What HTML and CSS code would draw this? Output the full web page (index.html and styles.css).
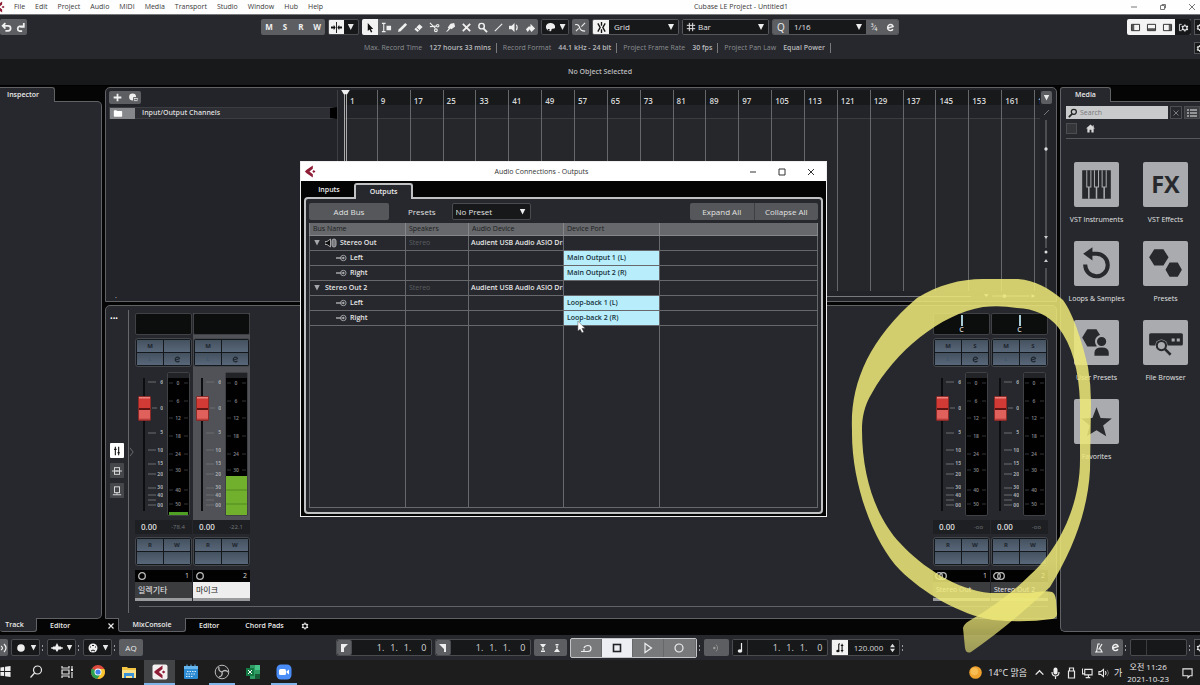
FILE: index.html
```html
<!DOCTYPE html>
<html lang="ko">
<head>
<meta charset="utf-8">
<title>Cubase LE Project - Untitled1</title>
<link rel="stylesheet" href="styles.css">
</head>
<body>
<svg class="defs" aria-hidden="true">
  <symbol id="meter-well" viewBox="0 0 23 153">
    <rect x="0.5" y="5.500" width="22" height="143" rx="1.500" fill="#010101" stroke="#3f4144"/>
    <rect x="1" y="6" width="21" height="5" fill="#222326"/>
  </symbol>
  <symbol id="gear" viewBox="0 0 10 10"><circle cx="5" cy="5" r="2.700" fill="none" stroke="currentColor" stroke-width="1.400"/><path d="M5 .6v1.600M5 7.800v1.600M1.200 2.800l1.400.8M7.400 6.400l1.400.8M1.200 7.200l1.400-.8M7.400 3.600l1.400-.8" stroke="currentColor" stroke-width="1.600"/></symbol>
  <symbol id="edit-e" viewBox="0 0 10 10"><path d="M2.600 5.600L7.900 3.900C7.400 2 5.600 1.200 4 1.900 1.900 2.800 1.200 5.400 2.300 7.200c1.100 1.700 3.900 1.700 5.500-.2" fill="none" stroke="currentColor" stroke-width="1.600"/></symbol>
  <symbol id="logo" viewBox="0 0 14 14"><path d="M9.500.5L2.800 5.200 1 7l1.800 1.800 6.700 4.700V10L5.800 7l3.700-3z" fill="#8e1d35"/><path d="M10.600 5.400l1.700 1.600-1.700 1.600L8.900 7z" fill="#8e1d35"/></symbol>
  <symbol id="jack" viewBox="0 0 12 8"><path d="M0 4h6" stroke="currentColor" stroke-width="1.800"/><circle cx="8" cy="4" r="3" fill="none" stroke="currentColor"/><circle cx="8" cy="4" r="1.300" fill="currentColor"/></symbol>
</svg>

<header class="titlebar">
  <svg class="app-mark" viewBox="7 0 7 14"><use href="#logo" width="14" height="14"/></svg>
  <nav class="menus"><a href="#">File</a><a href="#">Edit</a><a href="#">Project</a><a href="#">Audio</a><a href="#">MIDI</a><a href="#">Media</a><a href="#">Transport</a><a href="#">Studio</a><a href="#">Window</a><a href="#">Hub</a><a href="#">Help</a></nav>
  <h1 class="app-title">Cubase LE Project - Untitled1</h1>
  <div class="window-keys">
    <button aria-label="Minimize"><svg viewBox="0 0 8 8"><path d="M1 4h6"/></svg></button>
    <button aria-label="Restore"><svg viewBox="0 0 8 8"><path d="M1.500 2.500h4v4h-4zM3 2.500v-1h3.500V5h-1"/></svg></button>
    <button aria-label="Close"><svg viewBox="0 0 8 8"><path d="M1 1l6 6M7 1L1 7"/></svg></button>
  </div>
</header>

<section class="toolbar">
  <div class="tool-row">
    <div class="group undo">
      <button aria-label="Undo"><svg viewBox="0 0 10 10"><path d="M2 3.500h4.500a2 2 0 010 4.500H4M4 1L1.500 3.500 4 6" class="line"/></svg></button>
      <button aria-label="Redo"><svg viewBox="0 0 10 10"><path d="M8 4H4a2.200 2.200 0 000 4.200h2.500M8 1v3.500H4.800" class="line"/></svg></button>
    </div>
    <div class="tool-set">
      <div class="group letters"><button>M</button><button>S</button><button>R</button><button>W</button></div>
      <div class="group split">
        <button class="on" aria-label="Auto-scroll"><svg viewBox="0 0 12 12"><path d="M6 0v12" stroke="currentColor"/><path d="M0 5h3V3l2 3-2 3V7H0zM12 5H9V3L7 6l2 3V7h3z" fill="currentColor"/></svg></button>
        <button class="dark" aria-label="Auto-scroll options"><i class="tri"></i></button>
      </div>
      <div class="group pens">
        <button class="on" aria-label="Select"><svg viewBox="0 0 12 12"><path d="M3 1l6 6.500H6.500L8 11 6.500 11.500 5 8.200 3 9.800z" fill="currentColor"/></svg></button>
        <button aria-label="Range"><svg viewBox="0 0 12 12"><path d="M1 1.500h4M1 10.500h4M3 1.500v9" class="line"/><path d="M6 4h5v5H6z" fill="currentColor"/></svg></button>
        <button aria-label="Draw"><svg viewBox="0 0 12 12"><path d="M1 11l1-3 7-7 2 2-7 7z" fill="currentColor"/></svg></button>
        <button aria-label="Erase"><svg viewBox="0 0 12 12"><path d="M1.500 8L7 2.500l3.500 3L5 11z" fill="currentColor"/><path d="M3.500 6l3.500 3.200" stroke="#5c5e61"/></svg></button>
        <button aria-label="Split"><svg viewBox="0 0 12 12"><path d="M1 1l6 6M1 5l7-.5" class="line"/><circle cx="9.500" cy="4" r="1.300" class="line"/><circle cx="7.500" cy="9" r="1.500" class="line"/></svg></button>
        <button aria-label="Glue"><svg viewBox="0 0 12 12"><path d="M1 11l3-4-1-1 3-4 4-1 1 4-4 3-1-1-3 3z" fill="currentColor"/></svg></button>
        <button aria-label="Mute"><svg viewBox="0 0 12 12"><path d="M2 2l8 8M10 2l-8 8" stroke="currentColor" stroke-width="2"/></svg></button>
        <button aria-label="Zoom"><svg viewBox="0 0 12 12"><circle cx="5" cy="4.500" r="3" fill="none" stroke="currentColor" stroke-width="1.600"/><path d="M7 7l4 4" stroke="currentColor" stroke-width="2"/></svg></button>
        <button aria-label="Line"><svg viewBox="0 0 12 12"><path d="M2 10l8-8" class="line"/></svg></button>
        <button aria-label="Play"><svg viewBox="0 0 12 12"><path d="M0 4h3l3-3v10L3 8H0z" fill="currentColor"/><path d="M8 3q2 3 0 6" class="line"/></svg></button>
        <button aria-label="Color"><svg viewBox="0 0 12 12"><path d="M1 8l3-3h2V2l5 5-4 4-2-3-2 3z" fill="currentColor"/></svg></button>
      </div>
      <div class="group darkset">
        <button class="dark" aria-label="Color palette"><svg viewBox="0 0 12 12"><path d="M6 1a5 4.500 0 000 9c1.500 0 .5-2 1.500-2.500S11 8 11 5.500A5 4.500 0 006 1z" fill="currentColor"/><path d="M3 7.500h2v2H3z" fill="#17181a"/></svg><i class="tri"></i></button>
      </div>
      <div class="group single"><button aria-label="Snap to zero"><svg viewBox="0 0 12 12"><path d="M0 3q4-1 5 3t6 4" class="line"/><path d="M7 5l4-4M1 10l3-3" class="line"/></svg></button></div>
      <div class="group choice">
        <button class="on" aria-label="Snap"><svg viewBox="0 0 12 12"><path d="M6 0v4M6 8v4M2 1.500l2.500 4.500L2 10.500M10 1.500L7.500 6l2.500 4.500" stroke="currentColor" stroke-width="1.500" fill="none"/></svg></button>
        <label class="pick"><select aria-label="Snap type"><option>Grid</option></select></label>
      </div>
      <div class="group choice">
        <label class="pick"><svg viewBox="0 0 12 12"><path d="M4 1v10M8 1v10M1 4h10M1 8h10" class="line"/></svg><select aria-label="Grid type"><option>Bar</option></select></label>
      </div>
      <div class="group choice quant">
        <button class="q">Q</button>
        <label class="pick"><select aria-label="Quantize preset"><option>1/16</option></select></label>
        <button aria-label="Soft quantize">³⁄₄</button>
        <button aria-label="Quantize panel"><svg class="e" viewBox="0 0 10 10"><use href="#edit-e"/></svg></button>
      </div>
    </div>
    <div class="zones">
      <div class="group white">
        <button aria-label="Left zone"><svg viewBox="0 0 12 10"><path d="M1.500 1.500h9v7h-9zM4 1.500v7M2.500 2v6"/></svg></button>
        <button aria-label="Lower zone"><svg viewBox="0 0 12 10"><path d="M1.500 1.500h9v7h-9zM2 6.500h8M2 7.500h8"/></svg></button>
        <button aria-label="Right zone"><svg viewBox="0 0 12 10"><path d="M1.500 1.500h9v7h-9zM8 1.500v7M9.500 2v6"/></svg></button>
        <button class="dark" aria-label="Window layout"><svg viewBox="0 0 12 10"><path d="M4 1.500H1.500v7H4" fill="none" stroke="#ddd"/><use href="#gear" x="3" y="1" width="9" height="9"/></svg></button>
      </div>
      <button class="edge dark" aria-label="Toolbar setup"><svg viewBox="0 0 5 10"><use href="#gear" width="10" height="10"/></svg></button>
    </div>
  </div>
  <div class="status-row">
    <dl class="status">
      <div><dt>Max. Record Time</dt><dd>127 hours 33 mins</dd></div>
      <div><dt>Record Format</dt><dd>44.1 kHz - 24 bit</dd></div>
      <div><dt>Project Frame Rate</dt><dd>30 fps</dd></div>
      <div><dt>Project Pan Law</dt><dd>Equal Power</dd></div>
    </dl>
    <button class="edge dark" aria-label="Status setup"><svg viewBox="0 0 5 10"><use href="#gear" width="10" height="10"/></svg></button>
  </div>
</section>
<p class="infoline">No Object Selected</p>

<main class="workspace">
  <aside class="zone left-zone">
    <div class="tabs top"><button class="tab active">Inspector</button></div>
    <div class="pane"></div>
    <div class="tabs bottom"><button class="tab active">Track</button><button class="tab">Editor</button></div>
  </aside>

  <section class="center">
    <div class="project">
      <div class="tracks">
        <div class="group add">
          <button aria-label="Add track"><svg viewBox="0 0 10 10"><path d="M5 1.500v7M1.500 5h7" stroke="currentColor" stroke-width="1.600"/></svg></button>
          <button aria-label="Track preset"><svg viewBox="0 0 12 10"><circle cx="5" cy="4.500" r="3.800" fill="currentColor"/><path d="M6 5h5v4H6z" fill="currentColor" stroke="#5c5e61"/><path d="M7 7h3" stroke="#333"/></svg></button>
        </div>
        <div class="track"><span class="folder"><svg viewBox="0 0 12 10"><path d="M1 2q0-1 1-1h2l1 1h5q1 0 1 1v5q0 1-1 1H2q-1 0-1-1z" fill="#fff"/></svg></span><b>Input/Output Channels</b></div>
        <span class="speck">.</span>
      </div>
      <div class="timeline">
        <ol class="ruler"><li>1</li><li>9</li><li>17</li><li>25</li><li>33</li><li>41</li><li>49</li><li>57</li><li>65</li><li>73</li><li>81</li><li>89</li><li>97</li><li>105</li><li>113</li><li>121</li><li>129</li><li>137</li><li>145</li><li>153</li><li>161</li><li>169</li></ol>
        <svg class="playhead" viewBox="0 0 10 7"><path d="M0 0h10L7 5H3z" fill="#eee"/></svg>
        <div class="hscroll"><i></i><svg viewBox="0 0 60 8"><path d="M1 2h5L3.500 5zM52 2l4 2-4 2z" fill="#ddd"/><circle cx="23" cy="4" r="2" fill="#ddd"/><path d="M10 4h40" stroke="#aaa"/></svg></div>
      </div>
      <div class="vscroll">
        <button aria-label="Ruler options"><i class="tri"></i></button>
        <svg viewBox="0 0 10 190" preserveAspectRatio="xMidYMin"><path d="M3 11l5-5" stroke="#777"/><path d="M5 16v128M5 164v22" stroke="#77797c"/><circle cx="5" cy="45" r="1.700" fill="#ddd"/><path d="M3 132h4l-2 3zM3 158h4l-2-3z" fill="#ccc"/><circle cx="5" cy="148" r="1.500" fill="#ddd"/></svg>
      </div>
    </div>

    <div class="mixer">
      <div class="mix-side">
        <button class="more" aria-label="More">•••</button>
        <button class="sq white-sq" aria-label="Faders"><svg viewBox="0 0 12 12"><path d="M4 1v10M8 1v10M2.500 4h3M6.500 8h3" stroke="currentColor" stroke-width="1.300"/></svg></button>
        <button class="sq" aria-label="Inserts"><svg viewBox="0 0 12 12"><rect x="3" y="2" width="6" height="8" class="line"/><path d="M0 6h12M4 6h4" class="line"/></svg></button>
        <button class="sq" aria-label="Sends"><svg viewBox="0 0 12 12"><rect x="3" y="1" width="6" height="7" class="line"/><path d="M1 10.500h10M6 8v2" class="line"/></svg></button>
      </div>
      <div class="mix-line"><svg viewBox="0 0 6 12"><path d="M1 1l4 5-4 5" fill="none" stroke="#77797c"/></svg></div>
      <div class="mix-body">
        <div class="strips">
          <article class="strip">
            <div class="pan"></div>
            <div class="keys"><button>M</button><button aria-label="Solo"></button><button class="dim">L</button><button aria-label="Edit"><svg viewBox="0 0 10 10"><use href="#edit-e"/></svg></button></div>
            <div class="level"><input type="range" value="83" aria-label="일렉기타 volume"><svg class="scale" viewBox="0 0 16 153"><g id="fader-scale"><path d="M1 15h8M5 41h5M1 66h8M1 83h8M1 97h8M1 107h8M1 121h8M1 128h8M1 133h8M1 138h8" stroke="#6a6c70" fill="none"/><g class="scale-text"><text x="16" y="17">6</text><text x="16" y="43">0</text><text x="16" y="67">5</text><text x="16" y="85">10</text><text x="16" y="98">15</text><text x="16" y="109">20</text><text x="16" y="122">30</text><text x="16" y="130">40</text><text x="16" y="140">00</text></g></g></svg><svg class="meter" viewBox="0 0 23 153"><use href="#meter-well"/><path d="M2 145h19v3H2z" fill="#4f9f25"/><g id="meter-marks"><path d="M2 16h4M17 16h4M2 34h4M17 34h4M2 51h4M17 51h4M2 69h4M17 69h4M2 87h4M17 87h4M2 103h4M17 103h4M2 123h4M17 123h4M2 137h4M17 137h4" stroke="#55575a" stroke-opacity=".6" fill="none"/><g class="meter-text"><text x="11" y="18">0</text><text x="11" y="36">6</text><text x="11" y="53">12</text><text x="11" y="71">18</text><text x="11" y="89">24</text><text x="11" y="105">30</text><text x="11" y="125">40</text><text x="11" y="139">50</text></g></g></svg></div>
            <div class="readout"><b>0.00</b><span>-78.4</span></div>
            <div class="keys"><button>R</button><button>W</button><button aria-label="Slot 1"></button><button aria-label="Slot 2"></button></div>
            <div class="number"><svg viewBox="0 0 14 10"><circle cx="6" cy="5" r="3.300"/></svg>1</div>
            <div class="name">일렉기타</div>
          </article>
          <article class="strip selected">
            <div class="pan"></div>
            <div class="keys"><button>M</button><button aria-label="Solo"></button><button class="dim">L</button><button aria-label="Edit"><svg viewBox="0 0 10 10"><use href="#edit-e"/></svg></button></div>
            <div class="level"><input type="range" value="83" aria-label="마이크 volume"><svg class="scale" viewBox="0 0 16 153"><use href="#fader-scale"/></svg><svg class="meter" viewBox="0 0 23 153"><use href="#meter-well"/><use href="#meter-marks"/><path d="M1 109h21v39H1z" fill="#70b02c"/><path d="M1 123h21M1 137h21" stroke="#528a20"/></svg></div>
            <div class="readout"><b>0.00</b><span>-22.1</span></div>
            <div class="keys"><button>R</button><button>W</button><button aria-label="Slot 1"></button><button aria-label="Slot 2"></button></div>
            <div class="number"><svg viewBox="0 0 14 10"><circle cx="6" cy="5" r="3.300"/></svg>2</div>
            <div class="name">마이크</div>
          </article>
          <span class="fill"></span>
          <article class="strip">
            <div class="pan"><i></i>C</div>
            <div class="keys"><button>M</button><button>S</button><button class="dim">L</button><button aria-label="Edit"><svg viewBox="0 0 10 10"><use href="#edit-e"/></svg></button></div>
            <div class="level"><input type="range" value="83" aria-label="Stereo Out volume"><svg class="scale" viewBox="0 0 16 153"><use href="#fader-scale"/></svg><svg class="meter" viewBox="0 0 23 153"><use href="#meter-well"/><use href="#meter-marks"/></svg></div>
            <div class="readout"><b>0.00</b><span>-oo</span></div>
            <div class="keys"><button>R</button><button>W</button><button aria-label="Slot 1"></button><button aria-label="Slot 2"></button></div>
            <div class="number"><svg viewBox="0 0 14 10"><circle cx="5" cy="5" r="3.300"/><circle cx="9" cy="5" r="3.300"/></svg>1</div>
            <div class="name">Stereo Out</div>
          </article>
          <article class="strip">
            <div class="pan"><i></i>C</div>
            <div class="keys"><button>M</button><button>S</button><button class="dim">L</button><button aria-label="Edit"><svg viewBox="0 0 10 10"><use href="#edit-e"/></svg></button></div>
            <div class="level"><input type="range" value="83" aria-label="Stereo Out 2 volume"><svg class="scale" viewBox="0 0 16 153"><use href="#fader-scale"/></svg><svg class="meter" viewBox="0 0 23 153"><use href="#meter-well"/><use href="#meter-marks"/></svg></div>
            <div class="readout"><b>0.00</b><span>-oo</span></div>
            <div class="keys"><button>R</button><button>W</button><button aria-label="Slot 1"></button><button aria-label="Slot 2"></button></div>
            <div class="number"><svg viewBox="0 0 14 10"><circle cx="5" cy="5" r="3.300"/><circle cx="9" cy="5" r="3.300"/></svg>2</div>
            <div class="name">Stereo Out 2</div>
          </article>
        </div>
        <div class="mix-scroll"></div>
      </div>
    </div>
    <div class="tabs bottom"><button class="close-zone" aria-label="Close zone"><svg viewBox="0 0 8 8"><path d="M1.500 1.500l5 5M6.500 1.500l-5 5" class="line"/></svg></button><button class="tab active">MixConsole</button><button class="tab">Editor</button><button class="tab">Chord Pads</button><button class="setup" aria-label="Zone setup"><svg viewBox="0 0 10 10"><use href="#gear"/></svg></button></div>
  </section>

  <aside class="zone right-zone">
    <div class="tabs top"><button class="tab active">Media</button></div>
    <div class="pane media">
      <div class="search">
        <label><svg viewBox="0 0 12 12"><circle cx="7" cy="4.500" r="3" fill="none" stroke="#222" stroke-width="1.500"/><path d="M5 7l-4 4" stroke="#222" stroke-width="2"/></svg><input type="text" placeholder="Search" aria-label="Search"></label>
        <button aria-label="Clear"><svg viewBox="0 0 8 8"><path d="M1.500 1.500l5 5M6.500 1.500l-5 5" stroke="#77797c"/></svg></button>
        <button class="list" aria-label="List"><svg viewBox="0 0 12 10"><path d="M1 2h2M1 5h2M1 8h2M4 2h7M4 5h7M4 8h7" class="line"/></svg></button>
      </div>
      <div class="crumbs"><button aria-label="Back"></button><svg viewBox="0 0 10 10"><path d="M5 .5L0 5h1.500v4.500H4V6.500h2v3h2.500V5H10L8.500 3.600V1.500h-1v1.200z" fill="#d8d8d8"/></svg></div>
      <div class="tiles">
        <button><svg viewBox="0 0 44 44"><path d="M8 8h28v28H8z"/><path d="M14.500 8v28M22 8v28M29.500 8v28" stroke="#a9abae" stroke-width="1.500"/><path d="M12 8h5v17h-5zM19.500 8h5v17h-5zM27 8h5v17h-5z" fill="#a9abae"/><path d="M13 8h3v16h-3zM20.500 8h3v16h-3zM28 8h3v16h-3z"/></svg>VST Instruments</button>
        <button><svg viewBox="0 0 44 44"><text x="22" y="30" class="fx">FX</text></svg>VST Effects</button>
        <button><svg viewBox="0 0 44 44"><path d="M11 23a11 11 0 1011-10.500h-5" fill="none" stroke="#27292d" stroke-width="4"/><path d="M18 6v13l-9-6.500z"/></svg>Loops &amp; Samples</button>
        <button><svg viewBox="0 0 44 44"><path d="M11 8h9l5 8-5 8h-9l-5-8zM26 21h8l4 7-4 7h-8l-4-7z"/></svg>Presets</button>
        <button><svg viewBox="0 0 44 44"><path d="M13 9h9l5 8-5 9h-9l-5-9z"/><circle cx="27" cy="21" r="5.500" stroke="#a9abae" stroke-width="2"/><path d="M20 35v-3q0-5 7-5t7 5v3z"/></svg>User Presets</button>
        <button><svg viewBox="0 0 44 44"><rect x="6" y="13" width="33" height="12" rx="1.500"/><path d="M28 18h3v3h-3zM33 18h3v3h-3z" fill="#a9abae"/><path d="M21 28l6 6" stroke="#a9abae" stroke-width="5"/><circle cx="18" cy="25" r="6" fill="#a9abae"/><circle cx="18" cy="25" r="4.500" fill="none" stroke="#27292d" stroke-width="2"/><path d="M21 28l6 6" stroke="#27292d" stroke-width="2.500"/></svg>File Browser</button>
        <button><svg viewBox="0 0 44 44"><path d="M22 8l4 10.500 11 .5-8.500 7 3 10.500L22 30.500 12.500 36.500l3-10.500L7 19l11-.5z"/></svg>Favorites</button>
      </div>
    </div>
  </aside>
</main>

<footer class="transport">
  <div class="cluster">
    <button class="gray cut" aria-label="Monitor"><svg viewBox="0 0 8 10"><path d="M0 3q3 2 0 4M3 1q4 4 0 8" class="line"/></svg></button>
    <button class="combo" aria-label="Record mode"><svg viewBox="0 0 12 10"><circle cx="6" cy="5" r="3.800" fill="currentColor"/></svg><i class="tri"></i></button><i class="dots"></i>
    <button class="combo" aria-label="Audio record mode"><svg viewBox="0 0 12 10"><path d="M0 5h12" class="line"/><path d="M1 5l2-2 1 1 2-4 2 4 1-1 2 2-2 2-1-1-2 3-2-3-1 1z" fill="currentColor"/></svg><i class="tri"></i></button><i class="dots"></i>
    <button class="combo" aria-label="MIDI record mode"><svg viewBox="0 0 12 10"><circle cx="6" cy="5" r="4.500" fill="currentColor"/><path d="M3 4h1M5 2.500h2M8 4h1M4 8q2-2 4 0" stroke="#17181a" fill="none"/></svg><i class="tri"></i></button><i class="dots"></i>
    <button class="gray aq">AQ</button>
  </div>
  <div class="cluster middle">
    <div class="locator"><button class="gray" aria-label="Left locator"><svg viewBox="0 0 10 10"><path d="M2 1h7L5 5v4H2z" fill="currentColor"/></svg></button><span><i>1.</i><i>1.</i><i>1.</i><i>0</i></span></div>
    <div class="locator"><button class="gray" aria-label="Right locator"><svg viewBox="0 0 10 10"><path d="M1 1h7v8H6V6z" fill="currentColor"/></svg></button><span><i>1.</i><i>1.</i><i>1.</i><i>0</i></span></div>
    <button class="gray punch" aria-label="Punch"><svg viewBox="0 0 28 10"><path d="M4 1h6L7.500 4.500H6.500zM6.300 5h1.400v2H6.300zM5 7.500h4V9H5zM18 9h6l-2.500-3.500h-1zM20.300 3h1.400v2h-1.400zM19.500 1h3v1.500h-3z" fill="currentColor"/></svg></button>
    <div class="play">
      <button aria-label="Cycle"><svg viewBox="0 0 12 12"><path d="M3 9.500h5a3 3 0 000-6Q5 3.500 4 6M1 9.500l3 0V7" class="line"/></svg></button>
      <button class="lit" aria-label="Stop"><svg viewBox="0 0 12 12"><rect x="2.500" y="2.500" width="7" height="7" fill="none" stroke="#202226" stroke-width="1.600"/></svg></button>
      <button aria-label="Play"><svg viewBox="0 0 12 12"><path d="M3 1.500v9L9.500 6z" class="line"/></svg></button>
      <button aria-label="Record"><svg viewBox="0 0 12 12"><circle cx="6" cy="6" r="4" class="line"/></svg></button>
    </div><i class="dots"></i>
    <button class="gray click" aria-label="Pre-roll"><svg viewBox="0 0 12 10"><circle cx="4" cy="5" r="1.500" fill="#999"/><path d="M6 1q4 4 0 8" fill="none" stroke="#999"/></svg></button>
    <div class="locator note"><button class="dark" aria-label="Time format"><svg viewBox="0 0 10 10"><path d="M6.500 0v7.500" class="line"/><ellipse cx="5" cy="8" rx="2.300" ry="1.700" fill="currentColor"/></svg></button><span><i>1.</i><i>1.</i><i>1.</i><i>0</i></span></div>
    <div class="tempo"><button class="on" aria-label="Tempo track"><svg viewBox="0 0 12 12"><path d="M4.500 1v8M4.500 1.500L6 1M8.500 1v10M7 3h3M7 9h3" stroke="currentColor" stroke-width="1.300"/><ellipse cx="3.500" cy="9.500" rx="2" ry="1.500" fill="currentColor"/></svg></button><span>120.000</span><svg viewBox="0 0 6 12"><path d="M0 5h6L3 1zM0 7h6l-3 4z" fill="#ddd"/></svg></div><i class="dots"></i>
  </div>
  <div class="cluster">
    <div class="group metro"><button aria-label="Metronome"><svg viewBox="0 0 10 10"><path d="M1 9h7L6.500 6H5L8 1M2.500 9L4 1h2" class="line"/></svg></button><button aria-label="Click setup"><svg class="e" viewBox="0 0 10 10"><use href="#edit-e"/></svg></button></div><i class="dots"></i>
    <div class="activity"><i></i><i></i></div><i class="dots"></i>
    <button class="edge dark" aria-label="Transport setup"><svg viewBox="0 0 5 10"><use href="#gear" width="10" height="10"/></svg></button>
  </div>
</footer>

<footer class="taskbar">
  <div class="apps">
    <button class="start" aria-label="Start"><svg viewBox="0 0 11 12"><path d="M0 1.500l4-.5v4.500H0zM5 .8L11 0v5.500H5zM0 6.500h4V11l-4-.5zM5 6.500h6V12l-6-.8z" fill="#eee"/></svg></button>
    <button aria-label="Search"><svg viewBox="0 0 16 16"><circle cx="9.500" cy="6" r="4" class="line"/><path d="M6.500 9L2.500 13.500" class="line"/></svg></button>
    <button aria-label="Task view"><svg viewBox="0 0 16 16"><path d="M3 2v2h7V2M3 14v-2h7v2M3 6h7v4H3zM13 2v3M13 8v6" class="line"/><path d="M12 5h2v2h-2z" fill="#eee"/></svg></button>
    <button aria-label="Chrome"><svg viewBox="0 0 16 16"><circle cx="8" cy="8" r="7" fill="#dd4b3e"/><path d="M8 8L2 4.500A7 7 0 007 15l4-5z" fill="#2da14f"/><path d="M8 5h6.300A7 7 0 017.500 15L11 9z" fill="#f7c52d"/><circle cx="8" cy="8" r="3.500" fill="#fff"/><circle cx="8" cy="8" r="2.600" fill="#4081ec"/></svg></button>
    <button aria-label="Explorer"><svg viewBox="0 0 16 16"><path d="M1 3h5l1 1h8v10H1z" fill="#f3c744"/><path d="M1 6h14v8H1z" fill="#fbe08a"/><path d="M3 9h10v5h-2v-2H5v2H3z" fill="#3b94d9"/></svg></button>
    <button class="current run" aria-label="Cubase"><svg viewBox="0 0 16 16"><rect x="0.500" y="0.500" width="15" height="15" rx="2" fill="#f4f0f0"/><use href="#logo" x="1" y="1" width="14" height="14"/></svg></button>
    <button aria-label="Calendar"><svg viewBox="0 0 16 16"><rect x="1" y="2" width="14" height="13" rx="1" fill="#2c8bd3"/><path d="M1 2h14v3H1z" fill="#65b7ee"/><path d="M4 .5v3M8 .5v3M12 .5v3" stroke="#65b7ee"/><path d="M4 7.500h9M3 10h9M3 12.500h7" stroke="#cfe8fa" stroke-dasharray="1.500 1"/></svg></button>
    <button class="run" aria-label="OBS"><svg viewBox="0 0 16 16"><circle cx="8" cy="8" r="6.800" fill="#222" stroke="#bbb"/><path d="M8 8Q4 7 5 3M8 8q3-3 6 0M8 8q1 4-3 5" fill="none" stroke="#bbb" stroke-width="1.300"/></svg></button>
    <button aria-label="Excel"><svg viewBox="0 0 16 16"><path d="M5 1h10v14H5z" fill="#2f9d63"/><path d="M10 1h5v5h-5z" fill="#44c486"/><path d="M10 10h5v5h-5z" fill="#185c37"/><rect x="1" y="4" width="8" height="8" fill="#127a42"/><path d="M3 6l4 4M7 6l-4 4" stroke="#fff"/></svg></button>
    <button class="run" aria-label="Zoom"><svg viewBox="0 0 16 16"><rect x="0.500" y="0.500" width="15" height="15" rx="4.500" fill="#4b8df7"/><rect x="3" y="5" width="7" height="6" rx="1.500" fill="#fff"/><path d="M10.500 7.500L13 5.500v5l-2.500-2z" fill="#fff"/></svg></button>
  </div>
  <div class="tray">
    <svg class="sun" viewBox="0 0 12 12"><circle cx="6" cy="6" r="5.800" fill="#f0a22e"/><circle cx="5" cy="5" r="3.500" fill="#f8bd52"/></svg>
    <span class="weather">14°C 맑음</span>
    <svg viewBox="0 0 10 10"><path d="M1.500 6.500L5 3l3.500 3.500" class="line"/></svg>
    <svg viewBox="0 0 10 12"><rect x="3" y="0.500" width="4" height="7" rx="2" fill="#eee"/><path d="M1.500 5q0 4 3.500 4t3.500-4M5 9v3" class="line"/></svg>
    <svg viewBox="0 0 10 12"><path d="M3 4V1h4v3M2 4h6v7H2z" class="line"/></svg>
    <svg viewBox="0 0 12 12"><path d="M3 2h8v6H3zM7 8v3M4 11h5M0.500 1v6h2" class="line"/></svg>
    <svg viewBox="0 0 12 12"><path d="M1 4.500h2L6 2v8L3 7.500H1zM8 4q1.500 2 0 4" class="line"/><path d="M10 2.500q3 3.500 0 7" fill="none" stroke="#777"/></svg>
    <span class="ime">가</span>
    <time><span>오전 11:26</span><span>2021-10-23</span></time>
    <svg class="notice" viewBox="0 0 12 12"><path d="M1 1.500h10v7.500H8.500L6.500 11V9H1z" class="line"/></svg>
  </div>
</footer>

<section class="dialog" role="dialog" aria-label="Audio Connections - Outputs">
  <header class="dialog-title">
    <svg class="dlogo" viewBox="0 0 14 14"><use href="#logo"/></svg>
    <h2>Audio Connections - Outputs</h2>
    <div class="dialog-keys">
      <button aria-label="Minimize"><svg viewBox="0 0 8 8"><path d="M1 4h6"/></svg></button>
      <button aria-label="Maximize"><svg viewBox="0 0 8 8"><path d="M1 1h6v6H1z"/></svg></button>
      <button aria-label="Close"><svg viewBox="0 0 8 8"><path d="M1 1l6 6M7 1L1 7"/></svg></button>
    </div>
  </header>
  <div class="dialog-tabs"><button>Inputs</button><button class="active">Outputs</button></div>
  <div class="dialog-pane">
    <div class="dialog-bar">
      <button class="wide">Add Bus</button>
      <label for="preset">Presets</label>
      <span class="pick"><select id="preset"><option>No Preset</option></select></span>
      <div class="pair"><button>Expand All</button><button>Collapse All</button></div>
    </div>
    <table class="buses">
      <colgroup><col class="c1"><col class="c2"><col class="c3"><col class="c4"><col></colgroup>
      <thead><tr><th>Bus Name</th><th>Speakers</th><th>Audio Device</th><th>Device Port</th><th></th></tr></thead>
      <tbody>
        <tr><td><span class="bus"><i class="tri"></i><svg class="spk" viewBox="0 0 12 10"><path d="M0 3.500h2L5.500 1v8L2 6.500H0z" fill="#111" stroke="currentColor"/><rect x="7" y="1" width="4" height="8" rx="2" fill="#77797c" stroke="currentColor"/></svg>Stereo Out</span></td><td class="faint">Stereo</td><td>Audient USB Audio ASIO Dri</td><td></td><td></td></tr>
        <tr><td><span class="bus leaf"><svg viewBox="0 0 12 8"><use href="#jack"/></svg>Left</span></td><td></td><td></td><td class="port">Main Output 1 (L)</td><td></td></tr>
        <tr><td><span class="bus leaf"><svg viewBox="0 0 12 8"><use href="#jack"/></svg>Right</span></td><td></td><td></td><td class="port">Main Output 2 (R)</td><td></td></tr>
        <tr><td><span class="bus"><i class="tri"></i>Stereo Out 2</span></td><td class="faint">Stereo</td><td>Audient USB Audio ASIO Dri</td><td></td><td></td></tr>
        <tr><td><span class="bus leaf"><svg viewBox="0 0 12 8"><use href="#jack"/></svg>Left</span></td><td></td><td></td><td class="port">Loop-back 1 (L)</td><td></td></tr>
        <tr><td><span class="bus leaf"><svg viewBox="0 0 12 8"><use href="#jack"/></svg>Right</span></td><td></td><td></td><td class="port">Loop-back 2 (R)</td><td></td></tr>
        <tr class="rest"><td></td><td></td><td></td><td></td><td></td></tr>
      </tbody>
    </table>
  </div>
</section>
<svg class="pointer" viewBox="0 0 10 13"><path d="M1 0l8 8H5.500l2 4-2 1-2-4L1 11z" fill="#fff" stroke="#444" stroke-width=".5"/></svg>
<svg class="marker" viewBox="850 275 245 380">
  <defs><linearGradient id="ink" gradientUnits="userSpaceOnUse" x1="1040" y1="560" x2="1040" y2="650"><stop offset="0" stop-color="#eee878" stop-opacity=".86"/><stop offset=".6" stop-color="#eee878" stop-opacity=".78"/><stop offset="1" stop-color="#e4de72" stop-opacity=".64"/></linearGradient></defs>
  <path fill="url(#ink)" d="M852 430C850 385 868 340 917 298C938 285 960 279 983 279H1018C1035 280 1050 289 1063 300C1074 315 1083 345 1088 367Q1091 385 1091 403L1090 470C1088 510 1073 550 1050 587Q1010 625 971 652Q966 654 965 648L963 628Q964 624 969 621Q1005 600 1030 575C1055 553 1080 510 1080 460V403C1079 370 1072 345 1058 327Q1043 309 1017 308Q1000 305 983 307C940 314 895 352 872 393C864 406 862 418 862 430Z"/>
  <path fill="#eee878" fill-opacity=".86" d="M852 430H862C862 480 878 520 900 543C922 567 957 590 990 593H1030Q1045 590 1052 592Q1055 593 1056 600L1057 614Q1057 618 1052 619Q1025 623 993 620C960 615 922 592 900 570C875 545 851 485 852 430Z"/>
</svg>
</body>
</html>
```
FILE: styles.css
```css
* { box-sizing: border-box; }
html, body { height: 100%; }
body {
  margin: 0;
  position: relative;
  display: flex;
  flex-direction: column;
  min-height: 100vh;
  overflow: hidden;
  background: #050505;
  color: #d6d6d6;
  font: 7px/10px "Open Sans", "Noto Sans", "Noto Sans CJK KR", sans-serif;
}
button, input, select { font: inherit; color: inherit; margin: 0; padding: 0; border: 0; background: none; border-radius: 0; }
h1, h2, p, dl, dd, ol { margin: 0; padding: 0; font-weight: 400; }
a { color: inherit; text-decoration: none; }
svg { display: block; flex: none; }
.defs { position: absolute; width: 0; height: 0; }
.line { fill: none; stroke: currentColor; stroke-width: 1.2; }
.tri { display: block; flex: none; width: 6px; height: 6px; background: #e8e8e8; clip-path: polygon(0 0, 100% 0, 50% 100%); }
.on { background: #f2f2f2; color: #111; }
.dark { background: #17181a; color: #eee; }
.gray { background: #5c5e61; border-radius: 2px; color: #eee; }

.titlebar { display: grid; grid-template-columns: 6px 1fr auto 1fr; align-items: center; height: 15px; background: #fefefe; color: #3a3a3a; border-bottom: 1px solid #77797a; }
.app-mark { width: 6px; height: 12px; }
.menus { display: flex; gap: 10px; padding-left: 8px; white-space: nowrap; }
.app-title { font-size: 7px; padding-left: 276px; }
.window-keys { display: flex; justify-content: flex-end; gap: 21px; padding-right: 4px; }
.window-keys svg, .dialog-keys svg { width: 8px; height: 8px; fill: none; stroke: #777; }

.toolbar { background: #26282d; height: 44px; padding-top: 4px; }
.tool-row { display: flex; justify-content: space-between; height: 16px; }
.group { display: flex; background: #5c5e61; border-radius: 2px; overflow: hidden; color: #f0f0f0; }
.group button { flex: 1; display: flex; align-items: center; justify-content: center; }
.group svg { width: 11px; height: 11px; }
.group .e { width: 9px; height: 9px; }
.undo { width: 27px; }
.undo .line { stroke-width: 1.6; }
.tool-set { display: flex; gap: 3px; margin-left: 6px; }
.letters { width: 64px; font-size: 8px; font-weight: 700; }
.split { width: 31px; border: 1px solid #4a4c4f; }
.pens { width: 176px; }
.darkset { width: 28px; border: 1px solid #4a4c4f; }
.darkset button { gap: 4px; }
.single { width: 17px; }
.choice { width: 87px; border: 1px solid #55575a; background: #17181a; font-size: 8px; }
.choice > button { flex: 0 0 16px; }
.quant { width: 127px; }
.quant > button { background: #5c5e61; }
.q { font-size: 10px; }
.pick { flex: 1; display: flex; align-items: center; position: relative; background: #17181a; padding-left: 3px; font-size: 8px; color: #e2e2e2; }
.pick svg { width: 10px; height: 10px; }
.pick select { appearance: none; flex: 1; min-width: 0; padding-left: 2px; outline: 0; line-height: 12px; }
.pick::after { content: ""; width: 6px; height: 6px; margin-right: 4px; background: #eee; clip-path: polygon(0 0, 100% 0, 50% 100%); }
.zones { display: flex; gap: 3px; }
.white { width: 64px; background: #f4f4f4; }
.white button svg { fill: none; stroke: #222; width: 11px; height: 9px; }
.white .dark svg { stroke: none; }
.edge { display: flex; align-items: center; justify-content: flex-end; width: 6px; border: 1px solid #55575a; border-right: 0; }
.edge svg { width: 4px; height: 9px; }
.status-row { display: flex; justify-content: space-between; align-items: center; margin-top: 6px; height: 14px; }
.status-row .edge { height: 12px; }
.status { flex: 1; display: flex; justify-content: center; padding-right: 5px; color: #8c8e91; }
.status div { display: flex; gap: 7px; padding: 0 5px 0 6px; border-right: 1px solid #77797c; }
.status dd { font-weight: 600; color: #b9babc; }
.infoline { height: 27px; background: #17191b; border-bottom: 1px solid #000; text-align: center; line-height: 26px; font-weight: 600; color: #bbb; }

.workspace { flex: 1; min-height: 0; display: grid; grid-template-columns: 102px 1fr 140px; gap: 3px; padding: 1px 0 3px; }
.zone, .center { display: flex; flex-direction: column; min-width: 0; min-height: 0; }
.tabs { display: flex; flex: none; font-weight: 600; color: #eaeaea; }
.top { height: 14px; }
.bottom { height: 13px; }
.tab { padding: 0 13px; }
.top .active { position: relative; height: 15px; background: #26282d; border: 1px solid #606266; border-width: 1px 1px 0 0; border-radius: 0 3px 0 0; }
.bottom .active { position: relative; height: 14px; margin-top: -1px; background: #26282d; border: 1px solid #606266; border-top: 0; border-radius: 0 0 3px 3px; }
.pane { flex: 1; background: #26282d; border: 1px solid #606266; }
.left-zone .pane { border-left: 0; border-radius: 0 5px 5px 0; }
.left-zone .top .active { width: 55px; padding: 0 8px 0 0; }
.left-zone .bottom .active { width: 37px; padding: 0 7px 0 0; border-left: 0; }
.project { flex: 1; min-height: 0; display: flex; background: #222429; border: 1px solid #606266; border-radius: 5px 5px 0 0; margin-bottom: 3px; padding: 2px 3px 0; }
.tracks { display: flex; flex-direction: column; width: 229px; border-right: 1px solid #3c3e42; }
.add { width: 32px; height: 13px; margin-top: 1px; }
.track { display: flex; align-items: center; gap: 7px; height: 12px; margin-top: 3px; background: #2c2e33; border: 1px solid #3b3d41; border-right: 7px solid #000; color: #ddd; font-weight: 600; }
.track b { font-weight: 600; }
.folder { width: 25px; height: 11px; background: #85878a; padding: 1px 3px; }
.folder svg { width: 10px; height: 9px; }
.speck { margin-top: auto; padding-left: 6px; }
.timeline { position: relative; flex: 1; min-width: 0; display: flex; flex-direction: column; margin-left: 6px; }
.ruler { flex: 1; display: grid; grid-template-columns: repeat(21, 1fr) 6px; list-style: none; overflow: hidden; background: linear-gradient(#17191b 0 15px, #222429 15px 28px, #3a3c40 28px 29px, #25272b 29px); font-weight: 600; font-size: 8px; }
.ruler li { border-left: 1px solid #65676a; padding: 6px 0 0 3px; min-width: 0; overflow: hidden; }
.ruler li:first-child { border-left: 3px double #aaa; }
.playhead { position: absolute; left: -3px; top: 0; width: 9px; height: 6px; }
.hscroll { display: flex; align-items: center; height: 10px; padding-right: 1px; }
.hscroll i { flex: 1; height: 1px; background: #77797c; margin-right: 12px; }
.hscroll svg { width: 56px; height: 8px; }
.vscroll { width: 12px; margin-left: 1px; }
.vscroll button { display: grid; place-items: center; width: 11px; height: 13px; margin-top: 1px; background: #5c5e61; border-radius: 2px; }
.vscroll svg { width: 10px; height: 190px; }

.mixer { display: flex; background: #26282d; border: 1px solid #606266; border-radius: 5px 5px 0 0; padding: 4px 8px 0 3px; height: 314px; flex: none; }
.mix-side { display: flex; flex-direction: column; width: 16px; gap: 5px; padding-left: 1px; }
.more { height: 18px; font-size: 7px; text-align: left; margin-bottom: 110px; color: #fff; }
.sq { width: 14px; height: 15px; display: grid; place-items: center; background: #45474b; border-radius: 1px; }
.white-sq { background: #fff; color: #111; }
.sq svg { width: 10px; height: 10px; }
.mix-line { width: 10px; margin: 0 0 5px 3px; border-left: 1px solid #66686c; padding-top: 136px; }
.mix-line svg { width: 5px; height: 12px; }
.mix-body { flex: 1; min-width: 0; margin-top: 3px; margin-left: -3px; }
.strips { display: flex; gap: 1px; }
.fill { flex: 1; }
.strip { width: 57px; }
.pan { display: flex; flex-direction: column; align-items: center; height: 22px; padding-top: 1px; background: #0c0e0e; border: 1px solid #3f4144; border-radius: 2px; font-weight: 600; line-height: 8px; }
.pan i { width: 2px; height: 11px; background: #a9cbd6; }
.keys { display: grid; grid-template: repeat(2, 1fr) / repeat(2, 1fr); gap: 1px; height: 29px; margin-top: 3px; padding: 1px; background: #14181c; border: 1px solid #44474b; border-radius: 3px; font-size: 6px; font-weight: 700; color: #1d242c; }
.keys button { display: grid; place-items: center; background: linear-gradient(#44515f, #586779); line-height: 10px; }
.keys svg { width: 7px; height: 7px; }
.keys .dim { color: #43576b; }
.level { display: flex; height: 153px; }
.level input { appearance: none; writing-mode: vertical-lr; direction: rtl; width: 18px; height: 133px; margin-top: 11px; background: linear-gradient(90deg, transparent 8px, #0c0d0e 8px 10px, transparent 10px); }
.level input::-webkit-slider-thumb { appearance: none; width: 13px; height: 25px; border-radius: 1px; border: 1px solid #8c2a28; background: linear-gradient(#e8837e 0 1px, #d23a36 2px 11px, #5e1413 11px 13px, #e0605c 13px 21px, #a83230); }
.scale { width: 16px; height: 153px; margin-left: -6px; margin-right: 4px; }
.meter { width: 23px; height: 153px; }
.scale-text { fill: #a5a7aa; font-size: 5px; font-weight: 700; text-anchor: end; }
.meter-text { fill: #85878a; font-size: 5px; font-weight: 600; text-anchor: middle; }
.selected { background: linear-gradient(#505257 0 207px, transparent 207px); }
.readout { display: flex; justify-content: space-between; align-items: center; height: 14px; padding: 0 7px 0 6px; background: #1d1f22; font-size: 7px; color: #74767a; }
.readout b { font-size: 8px; font-weight: 600; color: #dedede; }
.readout span { font-size: 6px; }
.number { display: flex; justify-content: space-between; align-items: center; height: 12px; margin-top: 4px; padding: 0 3px 0 1px; background: #020202; font-size: 7px; }
.number svg { width: 14px; height: 10px; fill: none; stroke: #bbb; stroke-width: 1.3; }
.name { height: 19px; padding: 0 3px; background: #3b3c3e; border-bottom: 3px solid #9a9b9c; color: #eee; font-size: 8px; line-height: 15px; white-space: nowrap; overflow: hidden; }
.strip:nth-last-child(-n+2) .name { font-size: 7px; }
.selected .name { background: #eee; color: #222; }
.mix-scroll { height: 1px; margin: 5px 0 0 4px; background: #606266; }
.center .active { width: 68px; padding: 0; }
.center .bottom .tab { line-height: 12px; }
.close-zone { width: 13px; padding-left: 2px; }
.close-zone svg { width: 8px; height: 8px; }
.setup { padding-left: 4px; }
.setup svg { width: 8px; height: 8px; }

.right-zone .top .active { width: 51px; border-left-width: 1px; border-radius: 3px 3px 0 0; padding: 0; }
.media { border-right: 0; border-radius: 0 0 0 5px; padding: 4px 0 0 5px; }
.search { display: flex; gap: 2px; height: 13px; }
.search label { flex: 1; display: flex; align-items: center; gap: 2px; background: #c9cacb; padding-left: 2px; min-width: 0; color: #555; }
.search label svg { width: 10px; height: 10px; }
.search input { flex: 1; min-width: 0; outline: 0; }
.search input::placeholder { color: #77797c; opacity: 1; }
.search button { width: 12px; display: grid; place-items: center; border: 1px solid #4b4d51; color: #eee; }
.search button svg { width: 8px; height: 8px; }
.search .list { width: 16px; background: #3b3d41; }
.search .list svg { width: 12px; height: 10px; }
.crumbs { display: flex; align-items: center; gap: 9px; height: 20px; border-bottom: 1px solid #55575a; }
.crumbs button { width: 11px; height: 11px; background: #34363a; border: 1px solid #4b4d51; }
.crumbs svg { width: 9px; height: 9px; }
.tiles { display: grid; grid-template-columns: 1fr 1fr; row-gap: 16px; margin: 23px 0 0 -4px; }
.tiles button { display: flex; flex-direction: column; align-items: center; gap: 8px; height: 63px; color: #e4e4e4; white-space: nowrap; }
.tiles svg { width: 45px; height: 45px; background: #a9abae; border-radius: 2px; fill: #27292d; }
.fx { font-size: 23px; font-weight: 700; text-anchor: middle; }

.transport { display: flex; align-items: center; justify-content: space-between; flex: none; height: 25px; background: #26282d; }
.cluster { display: flex; align-items: center; gap: 3px; height: 17px; }
.middle { margin-left: 5px; height: 20px; }
.cluster > *, .locator, .tempo { height: 17px; }
.cluster svg { width: 10px; height: 10px; }
.cut { width: 8px; border-radius: 0 2px 2px 0; }
.combo { display: flex; align-items: center; justify-content: center; gap: 4px; width: 29px; background: #17181a; border: 1px solid #494b4f; border-radius: 2px; color: #eee; }
.combo svg { width: 12px; }
.dots { width: 1px; margin-right: 1px; margin-left: -1px; background: repeating-linear-gradient(transparent 0 2px, #999 2px 4px); }
.cluster > .dots { height: 10px; }
.aq { width: 24px; font-size: 8px; }
.locator { display: flex; width: 96px; background: #17181a; border: 1px solid #494b4f; border-radius: 2px; }
.locator button { display: grid; place-items: center; width: 15px; border-right: 1px solid #494b4f; }
.locator span { flex: 1; display: flex; align-items: center; justify-content: flex-end; gap: 6px; padding-right: 4px; font-size: 9px; }
.locator i { font-style: normal; }
.locator i:last-child { margin-left: 4px; }
.punch { width: 33px; display: grid; place-items: center; }
.cluster .punch svg { width: 28px; }
.middle .play { display: flex; width: 127px; height: 20px; border: 1px solid #c4c5c6; border-radius: 2px; background: #77797b; }
.play button { flex: 1; display: grid; place-items: center; color: #eee; border-right: 1px solid #66686a; }
.play .lit { background: #eceef4; }
.play svg { width: 12px; height: 12px; }
.click { width: 25px; display: grid; place-items: center; }
.tempo { display: flex; align-items: center; width: 69px; background: #17181a; border: 1px solid #494b4f; border-radius: 2px; font-size: 8px; }
.tempo button { width: 16px; height: 15px; display: grid; place-items: center; }
.tempo span { flex: 1; text-align: center; }
.tempo > svg { width: 5px; margin-right: 4px; }
.metro { width: 32px; }
.activity { display: flex; width: 57px; background: #17181a; border: 1px solid #494b4f; border-radius: 2px; }
.activity i:first-child { width: 16px; border-right: 1px solid #3b3d41; }
.cluster .edge svg { width: 4px; }

.taskbar { display: flex; justify-content: space-between; flex: none; height: 25px; background: #1d1d1e; color: #e8e8e8; }
.apps { display: flex; }
.apps button { width: 31px; display: grid; place-items: center; border-bottom: 2px solid transparent; }
.apps svg { width: 16px; height: 16px; }
.apps .start { width: 20px; justify-content: start; }
.apps .start svg { width: 11px; height: 11px; }
.apps .run { background: linear-gradient(#7eb4e8, #7eb4e8) center bottom / 26px 2px no-repeat border-box; }
.apps .current { background: linear-gradient(#7eb4e8, #7eb4e8) center bottom / 31px 2px no-repeat border-box, #434446; }
.tray { display: flex; align-items: center; gap: 5px; padding-right: 7px; }
.tray svg { width: 11px; height: 12px; }
.tray .sun { width: 13px; height: 13px; }
.weather { font-size: 9px; margin: 0 2px 0 1px; }
.ime { font-size: 9px; }
.tray time { display: flex; flex-direction: column; align-items: center; font-size: 8px; line-height: 12px; }
.tray .notice { margin-left: 8px; }

.dialog { position: absolute; left: 300px; top: 161px; width: 527px; height: 356px; display: flex; flex-direction: column; background: #040404; border: 1px solid #eee; padding-bottom: 2px; }
.dialog-title { display: grid; grid-template-columns: 1fr auto 1fr; align-items: center; flex: none; height: 19px; padding: 0 11px 0 3px; background: #fff; color: #333; }
.dlogo { width: 13px; height: 13px; }
.dialog-title h2 { font-size: 7px; margin-right: 36px; }
.dialog-keys { display: flex; justify-content: flex-end; gap: 21px; }
.dialog-keys svg { stroke: #333; }
.dialog-tabs { display: flex; flex: none; height: 16px; padding: 2px 0 0 3px; font-weight: 600; color: #eee; }
.dialog-tabs button { width: 50px; }
.dialog-tabs .active { position: relative; width: 59px; height: 16px; background: #26282d; border: 2px solid #c0c1c2; border-bottom: 0; border-radius: 3px 3px 0 0; }
.dialog-pane { flex: 1; min-height: 0; display: flex; flex-direction: column; margin: 0 3px; padding: 4px 3px 4px; background: #26282d; border: 2px solid #c0c1c2; border-radius: 4px; }
.dialog-bar { display: flex; align-items: center; flex: none; height: 17px; color: #e2e2e2; font-size: 8px; }
.wide { width: 80px; height: 17px; background: #55575a; border-radius: 2px; }
.dialog-bar label { margin-left: 19px; }
.dialog-bar .pick { flex: none; width: 79px; height: 17px; margin-left: 16px; padding-left: 1px; border: 1px solid #494b4f; border-radius: 2px; }
.pair { display: flex; width: 128px; height: 17px; margin-left: auto; background: #55575a; border-radius: 2px; }
.pair button { flex: 1; }
.pair button + button { border-left: 1px solid #3d3f42; }
.buses { flex: 1; width: 100%; height: 286px; margin-top: 3px; border-collapse: collapse; table-layout: fixed; display: table; font-weight: 600; }
.c1 { width: 96px; } .c2 { width: 63px; } .c3 { width: 95px; } .c4 { width: 96px; }
.buses th { height: 12px; padding: 0 3px; text-align: left; font-weight: 400; color: #1b1c1e; background: #66686b; border: 1px solid #85878a; border-top: 0; }
.buses th + th { border-left: 1px solid #26282d; }
.buses td { height: 15px; padding: 0 0 0 3px; border: 1px solid #66686c; white-space: nowrap; overflow: hidden; color: #e6e6e6; line-height: 10px; }
.buses td:nth-child(3) { padding-left: 2px; }
.buses .faint { color: #5c5e62; font-weight: 400; }
.buses .port { background: #b8eefb; color: #16303a; }
.rest td { height: auto; }
.bus { display: flex; align-items: center; gap: 5px; padding-left: 1px; }
.bus .tri { background: #a5a7aa; }
.bus svg { width: 11px; height: 8px; color: #a5a7aa; }
.bus .spk { width: 12px; height: 10px; margin: -1px -2px -1px 0; }
.leaf { gap: 3px; padding-left: 23px; }
.pointer { position: absolute; left: 577px; top: 321px; width: 9px; height: 12px; }
.marker { position: absolute; left: 850px; top: 275px; width: 245px; height: 380px; pointer-events: none; }
```
